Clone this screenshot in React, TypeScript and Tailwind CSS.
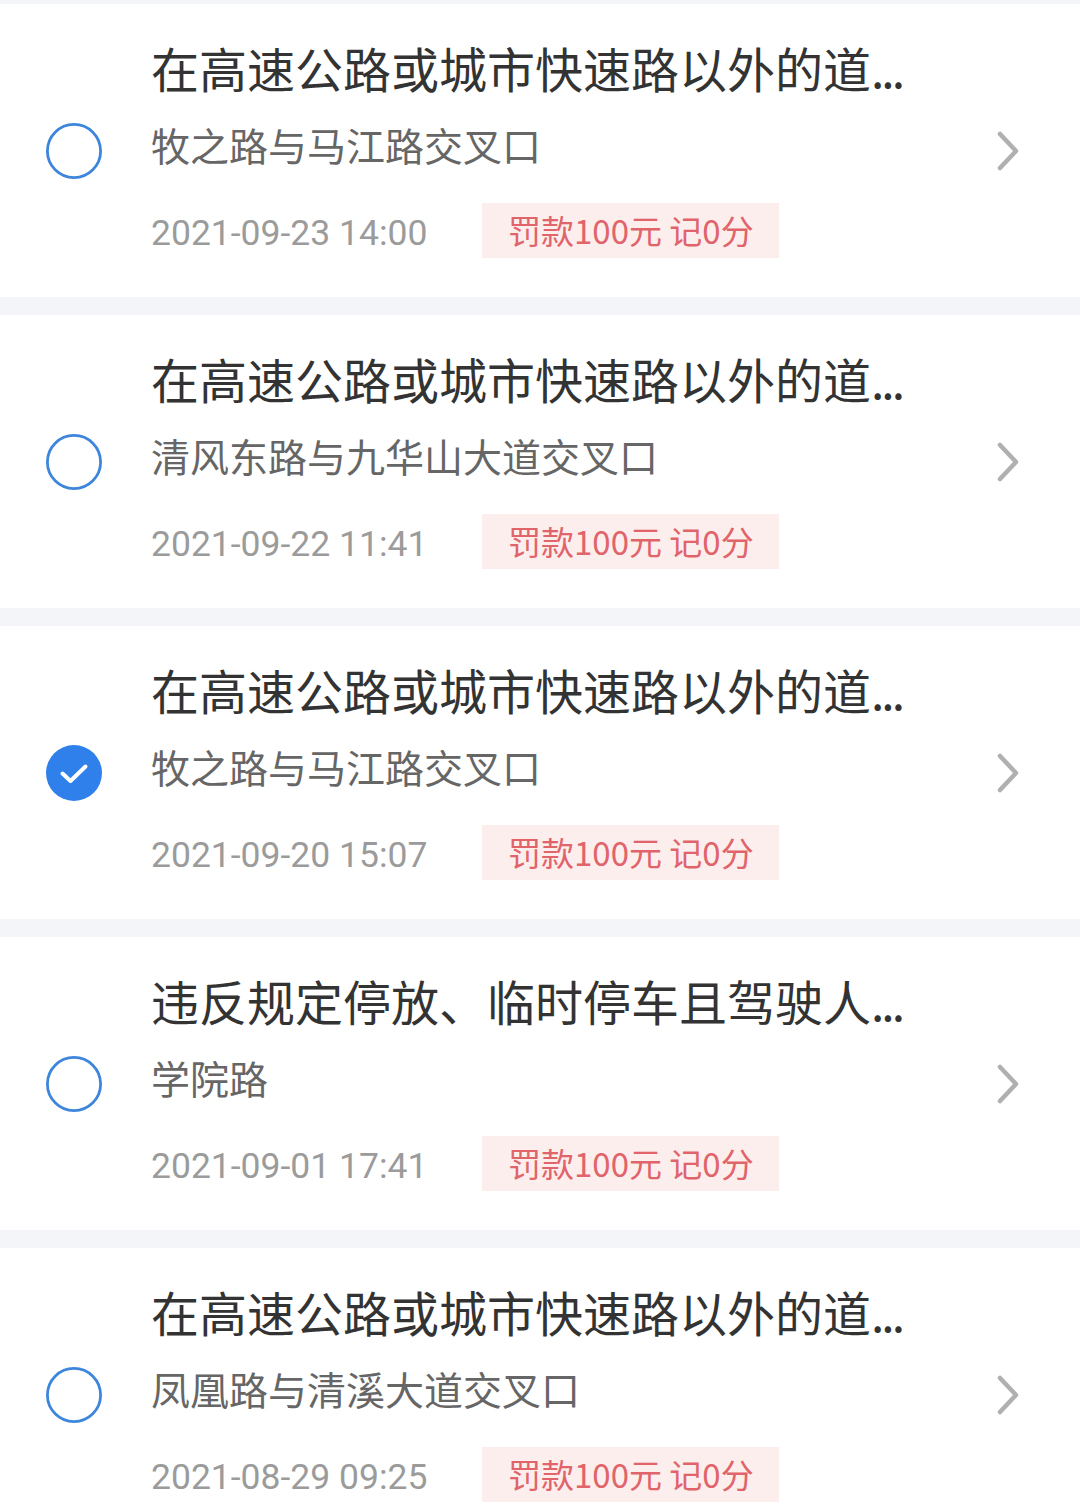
const records = [
  { title: "在高速公路或城市快速路以外的道", place: "牧之路与马江路交叉口", time: "2021-09-23 14:00", checked: false },
  { title: "在高速公路或城市快速路以外的道", place: "清风东路与九华山大道交叉口", time: "2021-09-22 11:41", checked: false },
  { title: "在高速公路或城市快速路以外的道", place: "牧之路与马江路交叉口", time: "2021-09-20 15:07", checked: true },
  { title: "违反规定停放、临时停车且驾驶人", place: "学院路", time: "2021-09-01 17:41", checked: false },
  { title: "在高速公路或城市快速路以外的道", place: "凤凰路与清溪大道交叉口", time: "2021-08-29 09:25", checked: false },
];

function Check({ on }: { on: boolean }) {
  return on ? (
    <svg width="56" height="56" viewBox="0 0 56 56" className="shrink-0">
      <circle cx="28" cy="28" r="28" fill="#2f80ea" />
      <path d="M16.5 28.5 L24.5 36 L39.5 21.5" fill="none" stroke="#fff" strokeWidth="4" strokeLinecap="round" strokeLinejoin="round" />
    </svg>
  ) : (
    <svg width="56" height="56" viewBox="0 0 56 56" className="shrink-0">
      <circle cx="28" cy="28" r="26.6" fill="none" stroke="#3d86dc" strokeWidth="2.8" />
    </svg>
  );
}

export default function App() {
  return (
    <div
      className="h-[1509px] overflow-hidden bg-[#f4f5f9] pt-[4px]"
      style={{ fontFamily: '"Noto Sans CJK SC", "Noto Sans", sans-serif' }}
    >
      <div className="flex flex-col gap-[18px]">
        {records.map((r, i) => (
          <div key={i} className="flex items-center bg-white pl-[46px] h-[293px] shrink-0">
            <Check on={r.checked} />
            <div className="ml-[49px] flex-1 pt-[31px] pb-[39px]">
              <div className="h-[64px] leading-[64px] text-[48px] text-[#333333] whitespace-nowrap">
                {r.title}
                <span className="tracking-[-3px]">...</span>
              </div>
              <div className="mt-[19px] h-[52px] leading-[52px] text-[39px] text-[#666666] whitespace-nowrap">
                {r.place}
              </div>
              <div className="mt-[33px] flex items-center h-[55px]">
                <div
                  className="w-[331px] pt-[6px] text-[35.5px] text-[#9b9b9b] whitespace-nowrap"
                  style={{ fontFamily: 'Roboto, "Noto Sans CJK SC", sans-serif' }}
                >
                  {r.time}
                </div>
                <div className="h-[55px] w-[297px] flex items-center pl-[26px] bg-[#fdeeee] text-[33px] text-[#e0646a] whitespace-nowrap">
                  罚款100元 记0分
                </div>
              </div>
            </div>
            <svg width="24" height="42" viewBox="0 0 24 42" className="mr-[60px] shrink-0">
              <path d="M4 4 L20 21 L4 38" fill="none" stroke="#b0b0b0" strokeWidth="4.5" strokeLinecap="round" strokeLinejoin="round" />
            </svg>
          </div>
        ))}
      </div>
    </div>
  );
}
